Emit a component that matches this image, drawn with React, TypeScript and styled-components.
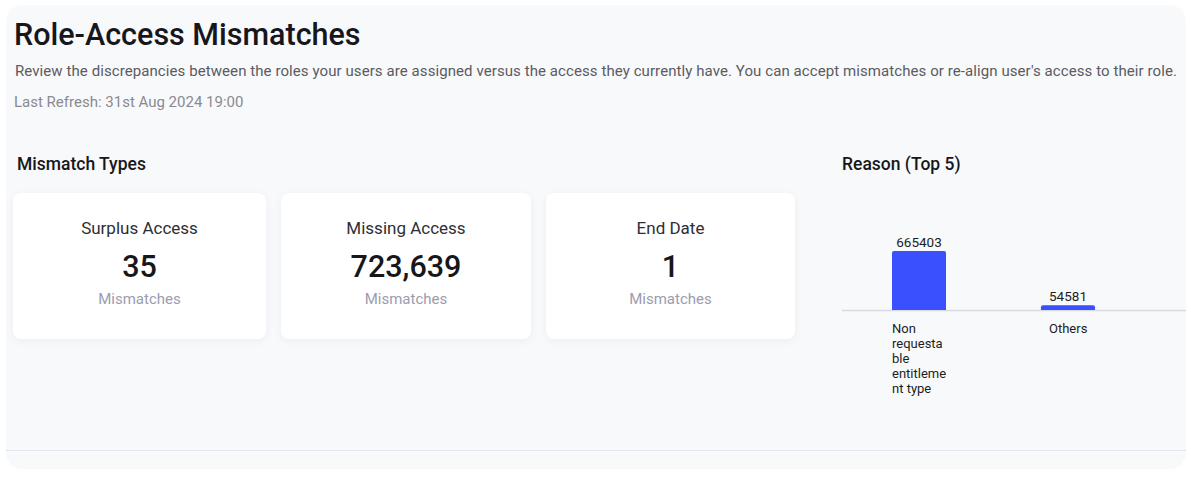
import React from "react";
import styled, { createGlobalStyle } from "styled-components";

const GlobalStyle = createGlobalStyle`
    body {
        margin: 0;
        background: #ffffff;
        font-family: "Roboto", "Noto Sans", sans-serif;
        color: #1b1b1f;
    }
`;

const Panel = styled.div`
    margin: 5px 5px 0 6px;
    height: 464px;
    box-sizing: border-box;
    border-radius: 16px;
    background: #f8f9fb;
    display: flex;
    flex-direction: column;
    overflow: hidden;
`;

const Header = styled.header`
    padding: 12px 8px 0 8px;
    display: flex;
    flex-direction: column;
`;

const Title = styled.h1`
    margin: 0;
    font-size: 30.5px;
    line-height: 36px;
    font-weight: 500;
    color: #17171b;
`;

const Description = styled.p`
    margin: 7px 0 0 1px;
    font-size: 15px;
    line-height: 22px;
    color: #5b5b62;
    white-space: nowrap;
    letter-spacing: 0.08px;
`;

const Refresh = styled.p`
    margin: 9px 0 0 0;
    font-size: 15px;
    line-height: 22px;
    color: #8a8a90;
`;

const Content = styled.main`
    flex: 1;
    display: flex;
    gap: 47px;
    padding: 40px 0 0 7px;
`;

const Column = styled.section<{ width?: string }>`
    display: flex;
    flex-direction: column;
    width: ${props => props.width ? props.width : "auto"};
    flex: ${props => props.width ? "none" : "1"};
`;

const SectionTitle = styled.h2<{ indent?: number }>`
    margin: 0 0 0 ${props => props.indent ?? 0}px;
    font-size: 17.5px;
    line-height: 22px;
    font-weight: 500;
    color: #17171b;
`;

const CardRow = styled.div`
    margin-top: 18px;
    display: flex;
    gap: 15px;
`;

const Card = styled.div<{ width: number }>`
    width: ${props => props.width}px;
    height: 146px;
    box-sizing: border-box;
    background: #ffffff;
    border-radius: 8px;
    box-shadow: 0 2px 10px rgba(30, 40, 80, 0.05);
    display: flex;
    flex-direction: column;
    align-items: center;
    padding-top: 23px;
`;

const CardLabel = styled.div`
    font-size: 17px;
    line-height: 24px;
    font-weight: 400;
    color: #2e2e33;
`;

const CardValue = styled.div`
    margin-top: 9px;
    font-size: 30.5px;
    line-height: 36px;
    font-weight: 500;
    color: #17171b;
`;

const CardUnit = styled.div`
    margin-top: 3px;
    font-size: 15px;
    line-height: 22px;
    color: #9c9cb0;
`;

const ChartBox = styled.div`
    margin-top: 5px;
`;

const Footer = styled.footer`
    height: 18px;
    border-top: 1px solid #e3e6f0;
`;

const mismatches = [
    { label: "Surplus Access", value: "35", width: 253 },
    { label: "Missing Access", value: "723,639", width: 250 },
    { label: "End Date", value: "1", width: 249 },
];

const reasons = [
    { lines: ["Non", "requesta", "ble", "entitleme", "nt type"], value: 665403, x: 50, labelX: 50 },
    { lines: ["Others"], value: 54581, x: 199, labelX: 207 },
];

const BAR_W = 54;
const BASE = 130;
const MAX_H = 59;

const ReasonChart = () => {
    const max = Math.max(...reasons.map(r => r.value));
    return (
        <svg width="344" height="230" viewBox="0 0 344 230" fontFamily="Roboto, 'Noto Sans', sans-serif">
            <line x1="0" y1={BASE + 0.5} x2="344" y2={BASE + 0.5} stroke="#d9dbe1" strokeWidth="1.5" />
            {reasons.map(r => {
                const h = Math.max(4, (r.value / max) * MAX_H);
                const cx = r.x + BAR_W / 2;
                return (
                    <g key={r.value}>
                        <path
                            d={`M${r.x} ${BASE} V${BASE - h + 2} Q${r.x} ${BASE - h} ${r.x + 2} ${BASE - h} H${r.x + BAR_W - 2} Q${r.x + BAR_W} ${BASE - h} ${r.x + BAR_W} ${BASE - h + 2} V${BASE} Z`}
                            fill="#3a4ffd"
                        />
                        <text x={cx} y={BASE - h - 4} textAnchor="middle" fontSize="13.5" fill="#1d1d22">
                            {r.value}
                        </text>
                        {r.lines.map((line, i) => (
                            <text key={line} x={r.labelX} y={153 + i * 15} fontSize="13" fill="#1d1d22">
                                {line}
                            </text>
                        ))}
                    </g>
                );
            })}
        </svg>
    );
};

export default function App() {
    return (
        <>
            <GlobalStyle />
            <Panel>
                <Header>
                    <Title>Role-Access Mismatches</Title>
                    <Description>
                        Review the discrepancies between the roles your users are assigned versus the access they currently have. You can accept mismatches or re-align user's access to their role.
                    </Description>
                    <Refresh>Last Refresh: 31st Aug 2024 19:00</Refresh>
                </Header>
                <Content>
                    <Column width="782px">
                        <SectionTitle indent={4}>Mismatch Types</SectionTitle>
                        <CardRow>
                            {mismatches.map(m => (
                                <Card key={m.label} width={m.width}>
                                    <CardLabel>{m.label}</CardLabel>
                                    <CardValue>{m.value}</CardValue>
                                    <CardUnit>Mismatches</CardUnit>
                                </Card>
                            ))}
                        </CardRow>
                    </Column>
                    <Column>
                        <SectionTitle>Reason (Top 5)</SectionTitle>
                        <ChartBox>
                            <ReasonChart />
                        </ChartBox>
                    </Column>
                </Content>
                <Footer />
            </Panel>
        </>
    );
}
